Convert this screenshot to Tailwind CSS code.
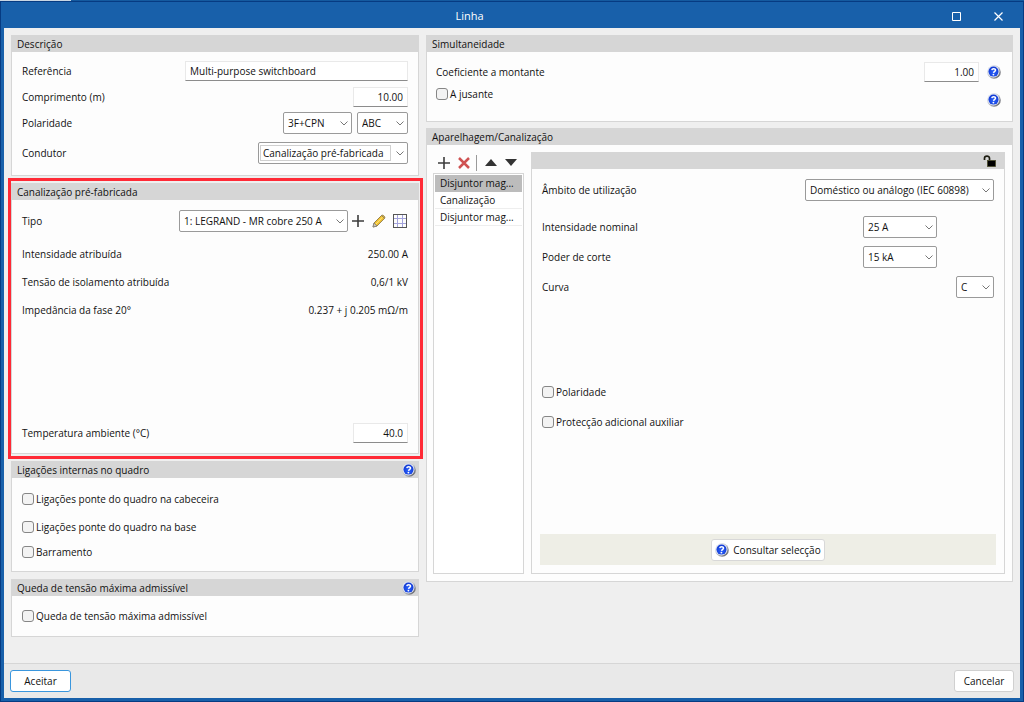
<!DOCTYPE html>
<html lang="pt">
<head>
    <meta charset="UTF-8">
    <meta name="viewport" content="width=device-width, initial-scale=1.0">
    <title>Linha</title>
    <script src="https://cdn.jsdelivr.net/npm/@tailwindcss/browser@4"></script>
</head>
<body class="min-h-screen bg-[#155a9f] font-['Open_Sans','Noto_Sans',sans-serif] text-[10px] leading-4 text-[#111]">
    <!-- Shared icons -->
    <svg class="absolute size-0" aria-hidden="true">
        <defs>
            <linearGradient id="help-rim" x1="0" y1="0" x2="1" y2="1">
                <stop offset="0" stop-color="#e8ecf4"/>
                <stop offset="0.5" stop-color="#b4b8c2"/>
                <stop offset="1" stop-color="#4c4c50"/>
            </linearGradient>
            <radialGradient id="help-fill" cx="0.5" cy="0.6" r="0.6">
                <stop offset="0" stop-color="#2a63ff"/>
                <stop offset="1" stop-color="#1238cf"/>
            </radialGradient>
        </defs>
        <symbol id="help" viewBox="0 0 14 14">
            <circle cx="7" cy="7" r="6.8" fill="url(#help-rim)"/>
            <circle cx="6.5" cy="6.5" r="5.9" fill="#e4e9f5"/>
            <circle cx="6.5" cy="6.6" r="5" fill="url(#help-fill)"/>
            <path d="M4.8 5.2C5 3.5 8.6 3.3 8.5 5.2C8.4 6.4 6.8 6.4 6.6 7.8" fill="none" stroke="#fff" stroke-width="1.5"/>
            <circle cx="6.4" cy="9.6" r="0.9" fill="#fff"/>
        </symbol>
        <symbol id="chevron" viewBox="0 0 8 5">
            <path d="M0.5 0.5L4 4L7.5 0.5" fill="none" stroke="#777" stroke-width="1"/>
        </symbol>
        <symbol id="plus" viewBox="0 0 12 12">
            <path d="M6 0V12M0 6H12" fill="none" stroke="#3c3c3c" stroke-width="1.6"/>
        </symbol>
    </svg>

    <div class="flex min-h-screen flex-col">
        <div class="h-px w-[71px] bg-[#c9d6e3]"></div>
        <div class="flex flex-1 flex-col border border-[#063b82] bg-[#1860aa] px-[3px] pb-[3px]">
            <!-- Title bar -->
            <header class="flex h-[26px] items-center pr-px text-white">
                <h1 class="flex-1 pt-0.5 text-center text-[11px]">Linha</h1>
                <button type="button" aria-label="Maximizar" class="flex h-full w-[42px] items-center justify-center pt-0.5">
                    <svg class="size-[9px]" viewBox="0 0 9 9"><path d="M0.5 0.5H8.5V8.5H0.5Z" fill="none" stroke="#fff"/></svg>
                </button>
                <button type="button" aria-label="Fechar" class="flex h-full w-[42px] items-center justify-center pt-0.5">
                    <svg class="size-[9px]" viewBox="0 0 9 9"><path d="M0.5 0.5L8.5 8.5M8.5 0.5L0.5 8.5" fill="none" stroke="#fff" stroke-width="1.2"/></svg>
                </button>
            </header>

            <div class="flex flex-1 flex-col bg-[#efefef]">
                <main class="flex flex-1 items-start gap-[7px] px-[7px] pt-[7px]">
                    <!-- Left column -->
                    <div class="flex w-[408px] flex-col gap-[7px]">
                        <section class="border border-[#d6d6d6] bg-[#fdfdfd]">
                            <h2 class="h-4 bg-[#d6d6d6] pl-[5px]">Descrição</h2>
                            <div class="px-2.5 pt-1.5 pb-[9px]">
                                <div class="flex h-[26px] items-center justify-between">
                                    <label for="ref">Referência</label>
                                    <input id="ref" type="text" value="Multi-purpose switchboard" class="h-5 w-[223px] border border-[#e9e9e9] border-b-[#8c8c8c] bg-white px-1 pb-px outline-none">
                                </div>
                                <div class="flex h-[26px] items-center justify-between">
                                    <label for="len">Comprimento (m)</label>
                                    <input id="len" type="text" value="10.00" class="h-5 w-[55px] border border-[#e9e9e9] border-b-[#8c8c8c] bg-white px-1 pb-px text-right outline-none">
                                </div>
                                <div class="flex h-[26px] items-center justify-between">
                                    <label for="pol">Polaridade</label>
                                    <div class="flex gap-[5px]">
                                        <div class="relative">
                                            <select id="pol" class="h-[22px] w-[69px] appearance-none rounded-[2px] border border-[#9a9a9a] bg-white pl-1"><option>3F+CPN</option></select>
                                            <svg class="pointer-events-none absolute top-[9px] right-1 h-[5px] w-2"><use href="#chevron"/></svg>
                                        </div>
                                        <div class="relative">
                                            <select aria-label="Fases" class="h-[22px] w-[51px] appearance-none rounded-[2px] border border-[#9a9a9a] bg-white pl-1"><option>ABC</option></select>
                                            <svg class="pointer-events-none absolute top-[9px] right-1 h-[5px] w-2"><use href="#chevron"/></svg>
                                        </div>
                                    </div>
                                </div>
                                <div class="mt-1 flex h-[26px] items-center justify-between">
                                    <label for="cond">Condutor</label>
                                    <div class="relative">
                                        <select id="cond" class="h-[22px] w-[150px] appearance-none rounded-[2px] border border-[#9a9a9a] bg-white pl-1"><option>Canalização pré-fabricada</option></select>
                                        <span class="pointer-events-none absolute inset-y-[3px] right-[17px] left-[2px] border border-[#d0d0d0]"></span>
                                        <svg class="pointer-events-none absolute top-[9px] right-1 h-[5px] w-2"><use href="#chevron"/></svg>
                                    </div>
                                </div>
                            </div>
                        </section>

                        <section class="relative border border-[#d6d6d6] bg-[#fdfdfd]">
                            <!-- Highlight frame -->
                            <div class="pointer-events-none absolute -top-1.5 -right-[5px] -bottom-1.5 -left-1 z-10 border-[3px] border-[#ff2a36]"></div>
                            <h2 class="h-4 bg-[#d6d6d6] pl-[5px]">Canalização pré-fabricada</h2>
                            <div class="px-2.5 pt-[7px] pb-1.5">
                                <div class="mb-[5px] flex h-7 items-center justify-between">
                                    <label for="tipo">Tipo</label>
                                    <div class="flex items-center pr-px">
                                        <div class="relative">
                                            <select id="tipo" class="h-[22px] w-[169px] appearance-none rounded-[2px] border border-[#9a9a9a] bg-white pl-1"><option>1: LEGRAND - MR cobre 250 A</option></select>
                                            <svg class="pointer-events-none absolute top-[9px] right-1 h-[5px] w-2"><use href="#chevron"/></svg>
                                        </div>
                                        <button type="button" aria-label="Adicionar" class="ml-1"><svg class="size-3"><use href="#plus"/></svg></button>
                                        <button type="button" aria-label="Editar" class="ml-2">
                                            <svg class="size-3.5" viewBox="0 0 14 14">
                                                <path d="M1 13L2 9L9.5 1.5C10.5 0.3 13.8 2.6 12.6 4.3L5 12Z" fill="#f1c232" stroke="#7d6a3a" stroke-width="0.8"/>
                                                <path d="M9.5 1.5L12.6 4.3" stroke="#6a6a6a" stroke-width="0.8"/>
                                                <path d="M3.5 10.5L10.5 3.2" stroke="#ffe680" stroke-width="1"/>
                                                <path d="M1 13L2 9L5 12Z" fill="#cfc8b8" stroke="#777" stroke-width="0.7"/>
                                            </svg>
                                        </button>
                                        <button type="button" aria-label="Tabela" class="ml-[7px]">
                                            <svg class="size-3.5" viewBox="0 0 14 14">
                                                <path d="M4.5 1V13M9.5 1V13M1 4.5H13M1 9.5H13" stroke="#a3a3dc" stroke-width="1"/>
                                                <rect x="0.5" y="0.5" width="13" height="13" fill="none" stroke="#555" stroke-width="1"/>
                                            </svg>
                                        </button>
                                    </div>
                                </div>
                                <dl>
                                    <div class="flex h-7 items-center justify-between"><dt>Intensidade atribuída</dt><dd>250.00 A</dd></div>
                                    <div class="flex h-7 items-center justify-between"><dt>Tensão de isolamento atribuída</dt><dd>0,6/1 kV</dd></div>
                                    <div class="flex h-7 items-center justify-between"><dt>Impedância da fase 20°</dt><dd>0.237 + j 0.205 mΩ/m</dd></div>
                                </dl>
                                <div class="mt-[95px] flex h-7 items-center justify-between">
                                    <label for="temp">Temperatura ambiente (°C)</label>
                                    <input id="temp" type="text" value="40.0" class="h-5 w-[55px] border border-[#e9e9e9] border-b-[#8c8c8c] bg-white px-1 pb-px text-right outline-none">
                                </div>
                            </div>
                        </section>

                        <section class="border border-[#d6d6d6] bg-[#fdfdfd]">
                            <div class="flex h-4 items-center justify-between bg-[#d6d6d6] pr-0.5 pl-[5px]">
                                <h2>Ligações internas no quadro</h2>
                                <button type="button" aria-label="Ajuda"><svg class="size-3.5"><use href="#help"/></svg></button>
                            </div>
                            <div class="px-2.5 pt-[7px] pb-2">
                                <label class="flex h-7 items-center gap-0.5"><input type="checkbox" class="size-3 appearance-none rounded-[3px] border border-[#868686] bg-[#f3f3f3]">Ligações ponte do quadro na cabeceira</label>
                                <label class="flex h-7 items-center gap-0.5"><input type="checkbox" class="size-3 appearance-none rounded-[3px] border border-[#868686] bg-[#f3f3f3]">Ligações ponte do quadro na base</label>
                                <label class="flex h-[22px] items-center gap-0.5"><input type="checkbox" class="size-3 appearance-none rounded-[3px] border border-[#868686] bg-[#f3f3f3]">Barramento</label>
                            </div>
                        </section>

                        <section class="border border-[#d6d6d6] bg-[#fdfdfd]">
                            <div class="flex h-4 items-center justify-between bg-[#d6d6d6] pr-0.5 pl-[5px]">
                                <h2>Queda de tensão máxima admissível</h2>
                                <button type="button" aria-label="Ajuda"><svg class="size-3.5"><use href="#help"/></svg></button>
                            </div>
                            <div class="px-2.5 py-1.5">
                                <label class="flex h-7 items-center gap-0.5"><input type="checkbox" class="size-3 appearance-none rounded-[3px] border border-[#868686] bg-[#f3f3f3]">Queda de tensão máxima admissível</label>
                            </div>
                        </section>
                    </div>

                    <!-- Right column -->
                    <div class="flex flex-1 flex-col gap-1.5">
                        <section class="border border-[#d6d6d6] bg-[#fdfdfd]">
                            <h2 class="h-4 bg-[#d6d6d6] pl-[5px]">Simultaneidade</h2>
                            <div class="flex justify-between pt-1.5 pr-[11px] pb-[7px] pl-[9px]">
                                <div>
                                    <label for="coef" class="flex h-7 items-center">Coeficiente a montante</label>
                                    <label class="flex h-4 items-center gap-0.5"><input type="checkbox" class="size-3 appearance-none rounded-[3px] border border-[#868686] bg-[#f3f3f3]">A jusante</label>
                                </div>
                                <div>
                                    <div class="flex h-7 items-center gap-2">
                                        <input id="coef" type="text" value="1.00" class="h-5 w-[55px] border border-[#e9e9e9] border-b-[#8c8c8c] bg-white px-1 pb-px text-right outline-none">
                                        <button type="button" aria-label="Ajuda"><svg class="size-3.5"><use href="#help"/></svg></button>
                                    </div>
                                    <div class="flex h-7 items-center justify-end">
                                        <button type="button" aria-label="Ajuda"><svg class="size-3.5"><use href="#help"/></svg></button>
                                    </div>
                                </div>
                            </div>
                        </section>

                        <section class="border border-[#d6d6d6] bg-[#fdfdfd]">
                            <h2 class="h-4 bg-[#d6d6d6] pl-[5px]">Aparelhagem/Canalização</h2>
                            <div class="flex gap-[7px] py-[7px] pr-[7px] pl-1.5">
                                <div class="flex w-[91px] flex-col">
                                    <div class="flex h-[21px] items-center pl-[5px]">
                                        <button type="button" aria-label="Adicionar"><svg class="size-3"><use href="#plus"/></svg></button>
                                        <button type="button" aria-label="Eliminar" class="ml-2"><svg class="size-3" viewBox="0 0 12 12"><path d="M1 1L11 11M11 1L1 11" fill="none" stroke="#cf5252" stroke-width="2.5"/></svg></button>
                                        <span class="ml-1.5 h-4 w-px bg-[#9a9a9a]"></span>
                                        <button type="button" aria-label="Subir" class="ml-2"><svg class="h-[7px] w-3" viewBox="0 0 12 7"><path d="M0 7L6 0L12 7Z" fill="#333"/></svg></button>
                                        <button type="button" aria-label="Descer" class="ml-2"><svg class="h-[7px] w-3" viewBox="0 0 12 7"><path d="M0 0L6 7L12 0Z" fill="#333"/></svg></button>
                                    </div>
                                    <ul class="flex-1 border border-[#d6d6d6] bg-white p-px">
                                        <li class="truncate border-b border-[#bcbcbc] bg-[#bcbcbc] pl-[5px]">Disjuntor mag...</li>
                                        <li class="truncate border-b border-[#eee] pl-[5px]">Canalização</li>
                                        <li class="truncate border-b border-[#eee] pl-[5px]">Disjuntor mag...</li>
                                    </ul>
                                </div>

                                <div class="flex-1 border border-[#d6d6d6]">
                                    <div class="flex h-4 items-center justify-end bg-[#d6d6d6] pr-2">
                                        <button type="button" aria-label="Desbloquear">
                                            <svg class="h-3 w-[13px]" viewBox="0 0 13 12">
                                                <path d="M1.5 5V3.2C1.5 0.4 6.5 0.4 6.5 3.2V5.5" fill="none" stroke="#1c1c10" stroke-width="1.7"/>
                                                <rect x="4.5" y="5.5" width="8" height="6" fill="#000" stroke="#4d4c2c" stroke-width="0.8"/>
                                            </svg>
                                        </button>
                                    </div>
                                    <div class="px-2 pt-1.5 pb-2">
                                        <div class="flex h-[30px] items-center justify-between px-0.5">
                                            <label for="ambito">Âmbito de utilização</label>
                                            <div class="relative">
                                                <select id="ambito" class="h-[22px] w-[189px] appearance-none rounded-[2px] border border-[#9a9a9a] bg-white pl-1"><option>Doméstico ou análogo (IEC 60898)</option></select>
                                                <svg class="pointer-events-none absolute top-[9px] right-1 h-[5px] w-2"><use href="#chevron"/></svg>
                                            </div>
                                        </div>
                                        <div class="mt-[7px] flex h-[30px] items-center justify-between pr-[59px] pl-0.5">
                                            <label for="inom">Intensidade nominal</label>
                                            <div class="relative">
                                                <select id="inom" class="h-[22px] w-[74px] appearance-none rounded-[2px] border border-[#9a9a9a] bg-white pl-1"><option>25 A</option></select>
                                                <svg class="pointer-events-none absolute top-[9px] right-1 h-[5px] w-2"><use href="#chevron"/></svg>
                                            </div>
                                        </div>
                                        <div class="flex h-[30px] items-center justify-between pr-[59px] pl-0.5">
                                            <label for="corte">Poder de corte</label>
                                            <div class="relative">
                                                <select id="corte" class="h-[22px] w-[74px] appearance-none rounded-[2px] border border-[#9a9a9a] bg-white pl-1"><option>15 kA</option></select>
                                                <svg class="pointer-events-none absolute top-[9px] right-1 h-[5px] w-2"><use href="#chevron"/></svg>
                                            </div>
                                        </div>
                                        <div class="flex h-[30px] items-center justify-between px-0.5">
                                            <label for="curva">Curva</label>
                                            <div class="relative">
                                                <select id="curva" class="h-[22px] w-[38px] appearance-none rounded-[2px] border border-[#9a9a9a] bg-white pl-1"><option>C</option></select>
                                                <svg class="pointer-events-none absolute top-[9px] right-1 h-[5px] w-2"><use href="#chevron"/></svg>
                                            </div>
                                        </div>
                                        <div class="mt-[75px] px-0.5">
                                            <label class="flex h-[30px] items-center gap-0.5"><input type="checkbox" class="size-3 appearance-none rounded-[3px] border border-[#868686] bg-[#f3f3f3]">Polaridade</label>
                                            <label class="flex h-[30px] items-center gap-0.5"><input type="checkbox" class="size-3 appearance-none rounded-[3px] border border-[#868686] bg-[#f3f3f3]">Protecção adicional auxiliar</label>
                                        </div>
                                        <div class="mt-[97px] flex h-[31px] items-center justify-center bg-[#eeeee6]">
                                            <button type="button" class="flex h-[22px] items-center gap-1 rounded-[3px] border border-[#d8d8d8] bg-white px-[3px]">
                                                <svg class="size-3.5"><use href="#help"/></svg>Consultar selecção
                                            </button>
                                        </div>
                                    </div>
                                </div>
                            </div>
                        </section>
                    </div>
                </main>

                <!-- Actions -->
                <footer class="flex items-center justify-between border-t border-[#d6d6d6] bg-[#e9e9e9] px-1.5 py-1.5">
                    <button type="button" class="h-[22px] w-[61px] rounded-[3px] border border-[#3a96dd] bg-white">Aceitar</button>
                    <button type="button" class="h-[22px] w-[60px] rounded-[3px] border border-[#d0d0d0] bg-white">Cancelar</button>
                </footer>
            </div>
        </div>
    </div>
</body>
</html>
